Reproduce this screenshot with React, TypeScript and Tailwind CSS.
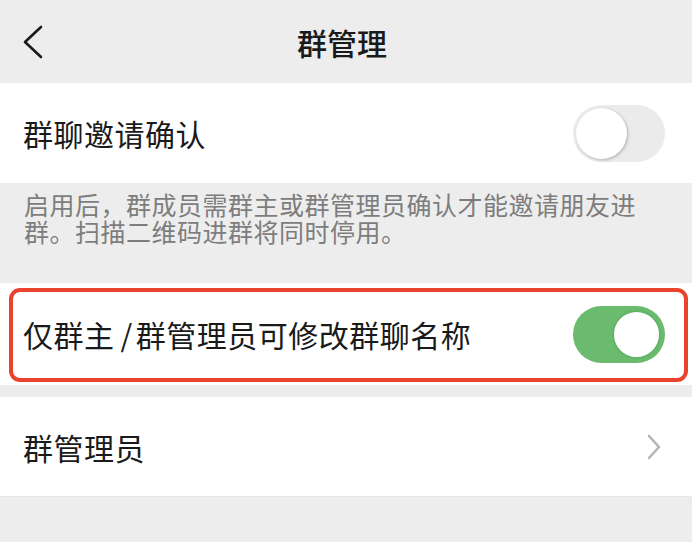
import React from "react";

const font = { fontFamily: '"Noto Sans CJK SC", "Noto Sans", sans-serif' };

function Toggle({ on }: { on: boolean }) {
  return on ? (
    <div className="relative h-[57px] w-[92px] rounded-full bg-[#6abb6e]">
      <div className="absolute right-[4px] top-[4px] h-[49px] w-[49px] rounded-full border-2 border-[#62b466] bg-white" />
    </div>
  ) : (
    <div className="relative h-[57px] w-[92px] rounded-full bg-[#ebebeb]">
      <div className="absolute left-[3px] top-[3px] h-[51px] w-[51px] rounded-full bg-white shadow-[1px_1px_3px_rgba(0,0,0,0.25)]" />
    </div>
  );
}

export default function App() {
  return (
    <div className="flex h-[542px] w-[692px] flex-col bg-[#ededed] text-[#1a1a1a]" style={font}>
      <div className="relative flex h-[83px] shrink-0 items-center justify-center">
        <svg className="absolute left-[22px] top-[24px]" width="24" height="36" viewBox="0 0 24 36">
          <polyline points="19,3 3,18 19,33" fill="none" stroke="#1a1a1a" strokeWidth="2.6" strokeLinecap="round" strokeLinejoin="round" />
        </svg>
        <span className="pr-[8px] text-[30px] font-medium leading-none">群管理</span>
      </div>

      <div className="flex h-[100px] shrink-0 items-center justify-between bg-white pl-[23px] pr-[27px]">
        <span className="text-[30px] leading-none tracking-[0.5px]">群聊邀请确认</span>
        <Toggle on={false} />
      </div>

      <div className="h-[100px] shrink-0 pl-[24px] pr-[50px] pt-[8px] text-[25px] leading-[27px] tracking-[0.5px] text-[#7d7d7d]">
        启用后，群成员需群主或群管理员确认才能邀请朋友进群。扫描二维码进群将同时停用。
      </div>

      <div className="relative flex h-[102px] shrink-0 items-center justify-between bg-white pl-[23px] pr-[27px]">
        <span className="text-[30px] leading-none tracking-[0.5px]">
          仅群主<span className="ml-[6px] mr-[3px]">/</span>群管理员可修改群聊名称
        </span>
        <Toggle on={true} />
        <div className="pointer-events-none absolute bottom-[3px] left-[9px] right-[4px] top-[5px] rounded-[11px] border-[4px] border-[#e9432d]" />
      </div>

      <div className="h-[12px] shrink-0" />

      <div className="flex h-[100px] shrink-0 items-center justify-between border-b border-[#e6e6e6] bg-white pl-[23px] pr-[30px]">
        <span className="text-[30px] leading-none tracking-[0.5px]">群管理员</span>
        <svg width="16" height="26" viewBox="0 0 16 26">
          <polyline points="3,2 13,13 3,24" fill="none" stroke="#b5b5b5" strokeWidth="2.6" strokeLinecap="round" strokeLinejoin="round" />
        </svg>
      </div>
    </div>
  );
}
